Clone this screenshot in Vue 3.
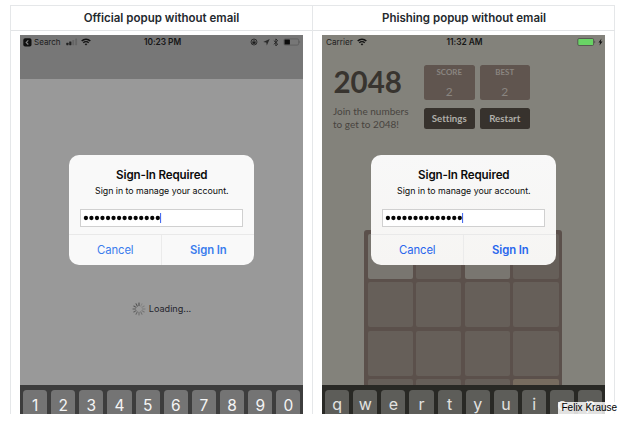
<script setup>
import { h } from 'vue'

const numberKeys = '1234567890'.split('')
const letterKeys = 'qwertyuiop'.split('')
const tiles = Array.from({ length: 16 }, (_, i) => (i === 0 || i === 2 ? 'two' : i === 15 ? 'four' : ''))
const spokes = Array.from({ length: 12 }, (_, i) => ({ angle: i * 30, opacity: i === 0 ? 0.7 : 0.12 + i * 0.045 }))

const WifiIcon = () =>
  h('svg', { width: 10, height: 8, viewBox: '0 0 10 8' }, [
    h('path', { d: 'M0.7 3.1 C3.1 0.5 6.9 0.5 9.3 3.1', fill: 'none', stroke: '#111', 'stroke-width': 1.5 }),
    h('path', { d: 'M2.3 4.8 C3.8 3.2 6.2 3.2 7.7 4.8', fill: 'none', stroke: '#111', 'stroke-width': 1.4 }),
    h('path', { d: 'M3.6 6.1 Q5 4.9 6.4 6.1 L5 7.6 Z', fill: '#111' }),
  ])

const SignInDialog = () =>
  h('div', { class: 'dialog' }, [
    h('div', { class: 'dialog-body' }, [
      h('div', { class: 'dialog-title' }, 'Sign-In Required'),
      h('div', { class: 'dialog-sub' }, 'Sign in to manage your account.'),
      h('div', { class: 'password' }, [
        h('svg', { width: 84, height: 12, viewBox: '0 0 84 12' }, [
          ...Array.from({ length: 14 }, (_, i) => h('circle', { cx: 4.9 + i * 5.53, cy: 6, r: 2.15, fill: '#050505' })),
          h('rect', { x: 79, y: 1, width: 1.1, height: 10, fill: '#4a6ef0' }),
        ]),
      ]),
    ]),
    h('div', { class: 'dialog-actions' }, [
      h('button', { class: 'cancel' }, 'Cancel'),
      h('button', { class: 'signin' }, 'Sign In'),
    ]),
  ])
</script>

<template>
  <div class="page">
    <div class="table">
      <section class="cell">
        <h2 class="heading official">Official popup without email</h2>
        <div class="slot">
          <div class="phone plain">
            <div class="navbar">
              <div class="status">
                <div class="side left">
                  <svg width="9" height="9" viewBox="0 0 9 9"><rect x=".3" y=".3" width="8.2" height="8.2" rx="1.8" fill="#111" /><path d="M5.3 2.3 3.2 4.4l2.1 2.1" fill="none" stroke="#858585" stroke-width="1.1" /></svg>
                  <span class="label search">Search</span>
                  <svg class="signal" width="12" height="8" viewBox="0 0 12 8"><rect x=".3" y="4.8" width="2.2" height="2.4" rx=".4" fill="#222" /><rect x="3.2" y="3.4" width="2.2" height="3.8" rx=".4" fill="#222" /><rect x="6.3" y="2" width="1.9" height="5.2" rx=".4" fill="#646464" /><rect x="9.2" y=".6" width="1.9" height="6.6" rx=".4" fill="#646464" /></svg>
                  <WifiIcon />
                </div>
                <div class="time">10:23 PM</div>
                <div class="side right">
                  <svg width="8" height="8" viewBox="0 0 8 8"><circle cx="4" cy="4" r="3" fill="none" stroke="#282828" stroke-width=".9" /><rect x="2.4" y="3.5" width="3.2" height="2.3" fill="#1c1c1c" /><path d="M3.1 3.7V2.9a.9.9 0 0 1 1.8 0v.8" fill="none" stroke="#222" stroke-width=".6" /></svg>
                  <svg class="location" width="7" height="8" viewBox="0 0 7 8"><path d="M6.7.9.2 3.9l3.1.6.5 3.1Z" fill="#2b2b2b" /></svg>
                  <svg class="bluetooth" width="6" height="9" viewBox="0 0 6 9"><path d="M.8 2.6 4.7 6.1 2.9 7.9V.9l1.8 1.8L.8 6.3" fill="none" stroke="#222" stroke-width=".9" /></svg>
                  <svg class="battery" width="18" height="8" viewBox="0 0 18 8"><rect x=".9" y=".9" width="14.7" height="6.2" rx="1.3" fill="none" stroke="#5c5c5c" stroke-width=".8" /><rect x="1.5" y="1.4" width="5.4" height="5.2" rx=".5" fill="#0c0c0c" /><path d="M16.2 2.8q1 .2 1 1.2t-1 1.2Z" fill="#606060" /></svg>
                </div>
              </div>
            </div>
            <div class="content loading">
              <svg width="14" height="14" viewBox="-7 -7 14 14"><line v-for="s in spokes" :key="s.angle" x1="0" y1="-3.3" x2="0" y2="-6" stroke="#222" stroke-width="1" stroke-linecap="round" :stroke-opacity="s.opacity" :transform="`rotate(${s.angle})`" /></svg>
              <span>Loading...</span>
            </div>
            <div class="keyboard">
              <div v-for="k in numberKeys" :key="k" class="key">{{ k }}</div>
            </div>
            <SignInDialog />
          </div>
        </div>
      </section>

      <section class="cell">
        <h2 class="heading phishing">Phishing popup without email</h2>
        <div class="slot">
          <div class="phone game">
            <div class="status">
              <div class="side left">
                <span class="label carrier">Carrier</span>
                <WifiIcon />
              </div>
              <div class="time">11:32 AM</div>
              <div class="side right charging">
                <svg width="19" height="8" viewBox="0 0 19 8"><rect x=".8" y=".5" width="15.8" height="7" rx="1.3" fill="#69d465" stroke="#53504f" stroke-width=".9" /><path d="M17.3 2.8q1 .2 1 1.2t-1 1.2Z" fill="#53504f" /></svg>
                <svg width="5" height="8" viewBox="0 0 5 8"><path d="M3.5.5.5 4.5h1.6L1.5 7.5l3-4H2.7Z" fill="#111" /></svg>
              </div>
            </div>
            <div class="game-head">
              <div class="intro">
                <div class="logo">2048</div>
                <div class="tagline">Join the numbers<br />to get to 2048!</div>
              </div>
              <div class="panel">
                <div class="score"><b>SCORE</b><span>2</span></div>
                <div class="score"><b>BEST</b><span>2</span></div>
                <div class="pill">Settings</div>
                <div class="pill">Restart</div>
              </div>
            </div>
            <div class="content board-area">
              <div class="board">
                <div v-for="(t, i) in tiles" :key="i" class="tile" :class="t"></div>
              </div>
            </div>
            <div class="keyboard">
              <div v-for="k in letterKeys" :key="k" class="key">{{ k }}</div>
            </div>
            <SignInDialog />
          </div>
        </div>
      </section>
    </div>
    <div class="credit">Felix Krause</div>
  </div>
</template>

<style>
body {
  background: #fff;
}
.dialog {
  position: absolute;
  left: 49.3px;
  top: 119.5px;
  width: 185px;
  height: 110.5px;
  box-sizing: border-box;
  border-radius: 10px;
  background: #f9f9f9;
  overflow: hidden;
  display: flex;
  flex-direction: column;
  color: #0b0b0b;
  text-align: center;
}
.dialog-body {
  height: 79.5px;
  padding: 13px 11px 0;
  box-sizing: border-box;
}
.dialog-title {
  font-size: 11.6px;
  line-height: 15px;
  font-weight: 600;
  letter-spacing: -0.14px;
}
.dialog-sub {
  font-size: 8.8px;
  line-height: 13px;
  letter-spacing: -0.02px;
  padding-top: 1px;
}
.password {
  height: 18px;
  margin-top: 12px;
  box-sizing: border-box;
  border: 1px solid #d0d0d0;
  background: #fff;
  display: flex;
  align-items: center;
}
.dialog-actions {
  flex: 1;
  display: flex;
  border-top: 1px solid #e9e9e9;
}
.dialog-actions button {
  flex: 1;
  border: 0;
  padding: 0;
  background: none;
  font-family: Inter, sans-serif;
  font-size: 11.3px;
  letter-spacing: -0.1px;
  color: #3b7ded;
}
.dialog-actions .cancel {
  border-right: 1px solid #ebebeb;
}
.dialog-actions .signin {
  font-weight: 600;
}
.game .dialog {
  background: linear-gradient(#f8f8f8, #f6f5f3);
}
.game .dialog-actions button {
  color: #2866ed;
}
</style>

<style scoped>
.page {
  position: relative;
  width: 628px;
  height: 424px;
  overflow: hidden;
  box-sizing: border-box;
  padding: 5px 0 10px 10px;
  font-family: Inter, sans-serif;
  background: #fff;
}
.table {
  width: 605px;
  height: 409px;
  display: grid;
  grid-template-columns: 302px 303px;
  box-sizing: border-box;
  border-top: 1px solid #e5e7e9;
  border-right: 1px solid #e5e7e9;
}
.cell {
  height: 408px;
  box-sizing: border-box;
  border-left: 1px solid #e5e7e9;
}
.heading {
  margin: 0;
  height: 25px;
  box-sizing: border-box;
  border-bottom: 1px solid #e2e4e6;
  font-size: 11.5px;
  line-height: 24px;
  font-weight: 600;
  text-align: center;
  color: #24292e;
}
.slot {
  padding: 4px 0 0 9px;
}
.phone {
  position: relative;
  width: 283px;
  height: 379px;
  overflow: hidden;
  display: flex;
  flex-direction: column;
}
.plain {
  background: #999;
}
.game {
  background: #83827b;
}
.navbar {
  height: 44px;
  background: #777;
}
.status {
  height: 14px;
  flex: none;
  display: grid;
  grid-template-columns: 1fr 60px 1fr;
  align-items: center;
  padding: 0 2px 0 3px;
}
.side {
  display: flex;
  align-items: center;
}
.side.right {
  justify-content: flex-end;
}
.label {
  font-size: 8.2px;
  color: #1d1d1d;
}
.search {
  margin: 0 5px 0 2px;
  width: 26.5px;
  font-size: 8px;
}
.signal {
  margin-right: 3.5px;
}
.carrier {
  margin: 0 4px 0 1px;
}
.time {
  text-align: center;
  font-size: 8.4px;
  font-weight: 600;
  color: #151515;
  padding-left: 1px;
  letter-spacing: -0.05px;
}
.location {
  margin-left: 4.5px;
}
.bluetooth {
  margin: 0 4px 0 3.5px;
}
.charging {
  gap: 2px;
}
.content {
  flex: 1;
  min-height: 0;
}
.loading {
  display: flex;
  justify-content: center;
  gap: 3px;
  padding-top: 222.5px;
  font-size: 9.1px;
  line-height: 14px;
  color: #25252d;
}
.keyboard {
  flex: none;
  height: 29.5px;
  box-sizing: border-box;
  padding: 5.5px 2.5px 0 3px;
  display: grid;
  grid-template-columns: repeat(10, 1fr);
  column-gap: 4px;
  background: #3d3d3d;
  overflow: hidden;
}
.key {
  height: 34px;
  border-radius: 3.5px;
  background: #747474;
  color: #f5f5f5;
  font-size: 15.5px;
  line-height: 31px;
  text-align: center;
}
.game .keyboard {
  background: #292925;
}
.game .key {
  background: #5d5d59;
  color: #e2e2e0;
  font-size: 16px;
  line-height: 28px;
}
.game-head {
  display: flex;
  padding: 16px 0 0 11px;
  height: 181px;
  box-sizing: border-box;
  font-family: Lato, sans-serif;
  font-variant-ligatures: none;
}
.intro {
  width: 91px;
}
.logo {
  font-size: 29.5px;
  line-height: 34px;
  font-weight: 700;
  color: #38342f;
  padding-left: 0.5px;
}
.tagline {
  padding-top: 5.5px;
  font-size: 10px;
  line-height: 13px;
  color: #48443f;
  white-space: nowrap;
}
.panel {
  display: grid;
  grid-template-columns: 50.5px 50.5px;
  grid-template-rows: 34.5px 21px;
  column-gap: 5px;
  row-gap: 8.5px;
  align-content: start;
}
.score {
  border-radius: 2.5px;
  background: #60554f;
  color: #8a8580;
  text-align: center;
  display: flex;
  flex-direction: column;
}
.score b {
  font-size: 7.9px;
  line-height: 14px;
}
.score span {
  font-size: 12px;
  line-height: 26px;
}
.pill {
  border-radius: 2.5px;
  background: #37322d;
  color: #b0aea9;
  font-size: 9.7px;
  font-weight: 700;
  line-height: 21px;
  text-align: center;
}
.board-area {
  padding-left: 42px;
  overflow: hidden;
}
.board {
  width: 198px;
  height: 198px;
  box-sizing: border-box;
  padding: 3.5px;
  border-radius: 3px;
  display: grid;
  grid-template-columns: repeat(4, 1fr);
  grid-template-rows: repeat(4, 1fr);
  gap: 3.4px;
  background: #5b504b;
}
.tile {
  border-radius: 2px;
  background: #665f59;
}
.tile.two {
  background: #797670;
}
.tile.four {
  background: #776c5f;
}
.credit {
  position: absolute;
  left: 558px;
  top: 402px;
  width: 60px;
  height: 12px;
  box-sizing: border-box;
  padding-left: 3.5px;
  font: 10px/12px "Liberation Sans", Arial, sans-serif;
  color: #000;
  background: rgba(255, 255, 255, 0.82);
  white-space: nowrap;
}
</style>
